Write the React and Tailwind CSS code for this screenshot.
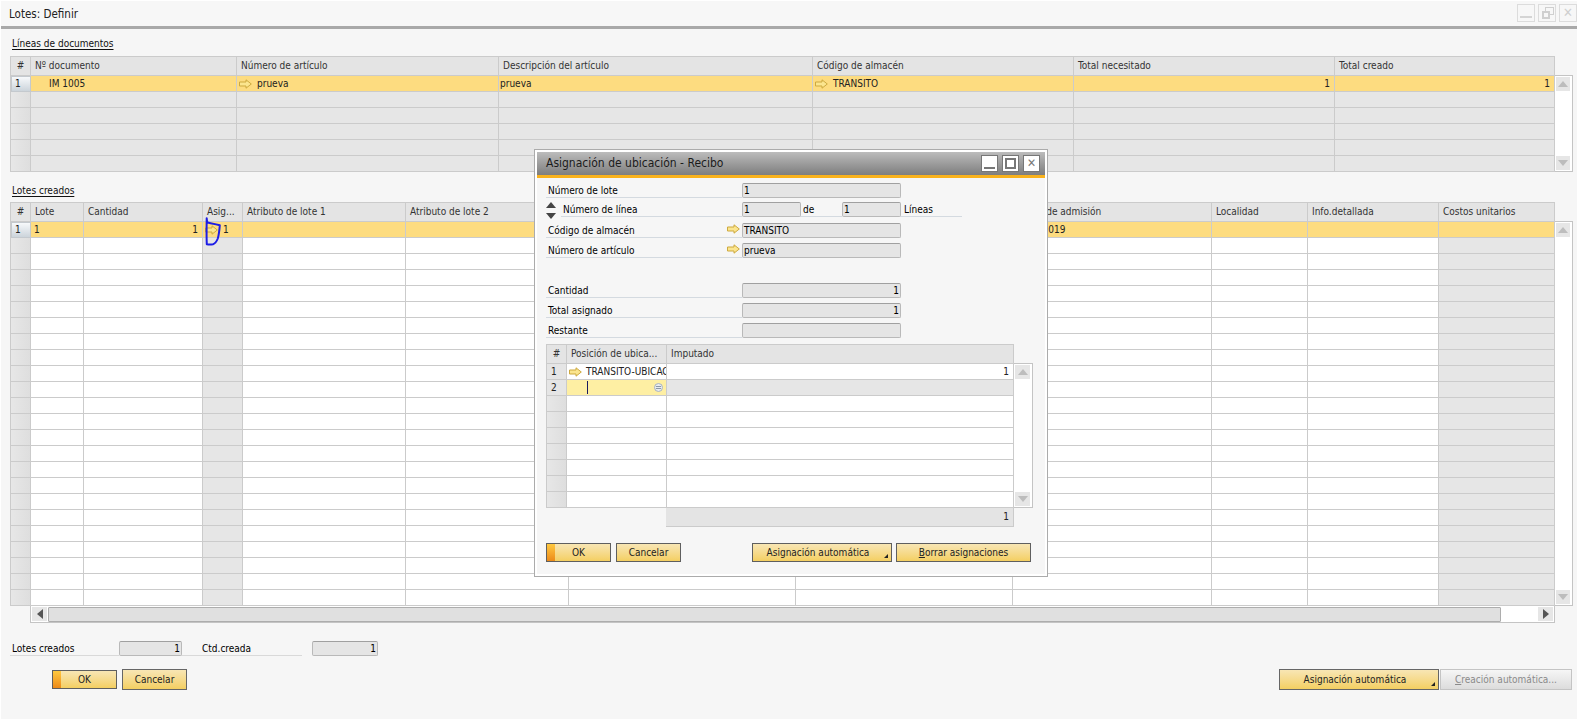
import React from "react";

const Arrow = ({ className = "" }) => (
  <svg width="13" height="10" viewBox="0 0 13 10" className={`shrink-0 ${className}`}>
    <path d="M0.5 3H7V0.8L12.3 5L7 9.2V7H0.5Z" fill="#fbe58e" stroke="#cda93f" strokeWidth="1" />
  </svg>
);

const Tri = ({ dir, color = "#bdbdbd" }) => {
  const d = { up: "M0 6L5 0L10 6Z", down: "M0 0L10 0L5 6Z", left: "M6 0V10L0 5Z", right: "M0 0V10L6 5Z" }[dir];
  const horizontal = dir === "left" || dir === "right";
  return (
    <svg width={horizontal ? 6 : 10} height={horizontal ? 10 : 6} viewBox={horizontal ? "0 0 6 10" : "0 0 10 6"}>
      <path d={d} fill={color} />
    </svg>
  );
};

const NumCell = ({ children, selected }) => (
  <div
    className={
      selected
        ? "flex items-center pl-[3px] border border-[#c4c9ce] bg-gradient-to-b from-[#f7f9fb] to-[#ccd4db] text-[#222]"
        : children
        ? "flex items-center pl-[4px] border-r border-b border-[#cbcbcb] bg-[#e5e5e5]"
        : "border-r border-b border-[#cbcbcb] bg-gradient-to-r from-[#e7e7e7] to-[#dedede]"
    }
  >
    {children}
  </div>
);

const Cell = ({ children, bg = "bg-white", right, className = "" }) => (
  <div
    className={`flex items-center overflow-hidden whitespace-nowrap border-r border-b border-[#cbcbcb] ${bg} ${
      right ? "justify-end pr-[4px]" : "pl-[1px]"
    } ${className}`}
  >
    {children}
  </div>
);

const Head = ({ children, center }) => (
  <div
    className={`flex items-center overflow-hidden whitespace-nowrap border-r border-b border-[#cbcbcb] bg-[#e4e4e4] text-[#333] ${
      center ? "justify-center" : "pl-[4px]"
    }`}
  >
    {children}
  </div>
);

const VScroll = ({ className = "w-[18px]" }) => (
  <div className={`flex flex-col justify-between border border-l-0 border-[#c4c4c4] bg-white p-[1px] pr-[2px] ${className}`}>
    <div className="flex h-[14px] items-center justify-center bg-[#e6e6e6]"><Tri dir="up" /></div>
    <div className="flex h-[14px] items-center justify-center bg-[#e6e6e6]"><Tri dir="down" /></div>
  </div>
);

const Field = ({ children, right, className = "w-[159px]" }) => (
  <div
    className={`flex h-[15px] items-center shrink-0 rounded-[2px] border border-[#b9b9b9] border-t-[#a0a0a0] bg-[#e5e5e5] text-black ${
      right ? "justify-end pr-[1px]" : "pl-[1px]"
    } ${className}`}
  >
    {children}
  </div>
);

const Btn = ({ children, primary, strong, className = "", corner, disabled }) => (
  <button
    className={`relative flex items-center justify-center border ${
      disabled
        ? "border-[#c4c4c4] bg-gradient-to-b from-[#f6f6f6] to-[#dcdcdc] text-[#8a8a8a]"
        : "border-[#5f5f5f] bg-gradient-to-b from-[#f8e6b4] to-[#f4cf60] text-[#222]"
    } ${strong ? "h-[21px] border-[#666]" : "h-[19px]"} ${corner ? "pr-[8px]" : ""} ${className}`}
  >
    {primary && <span className="absolute left-0 top-0 h-full w-[8px] bg-gradient-to-b from-[#ffc93f] to-[#ec8a18]" />}
    {children}
    {corner && (
      <svg width="4" height="4" viewBox="0 0 4 4" className="absolute bottom-[3px] right-[3px]">
        <path d="M4 0V4H0Z" fill="#222" />
      </svg>
    )}
  </button>
);

const FormRow = ({ label, children, className = "", right }) => (
  <div className={`flex items-center h-[15px] ${className}`}>
    <div className="flex h-[15px] items-center justify-between w-[196px] shrink-0 border-b border-[#d4dae0] pl-[2px] pt-px text-black">
      <span>{label}</span>
      {right}
    </div>
    {children}
  </div>
);

const T1 = ["Nº documento", "Número de artículo", "Descripción del artículo", "Código de almacén", "Total necesitado", "Total creado"];
const GRAY = "bg-[#e6e6e6]";
const YEL = "bg-[#fddc80]";

const T2 = [
  "Lote",
  "Cantidad",
  "Asig...",
  "Atributo de lote 1",
  "Atributo de lote 2",
  "",
  "",
  "Fecha de admisión",
  "Localidad",
  "Info.detallada",
  "Costos unitarios",
];

export default function App() {
  return (
    <div className="relative h-[724px] w-[1577px] overflow-hidden bg-white pt-px pl-px font-['DejaVu_Sans','Liberation_Sans',sans-serif] text-[10px] leading-none [font-stretch:condensed] text-[#222]">
      <div className="flex h-[718px] w-[1576px] flex-col bg-[#f6f6f6]">
        {/* Title bar */}
        <div className="flex h-[28px] shrink-0 items-center justify-between border-b-[3px] border-[#a9a9a9] bg-[#f7f7f7] pl-[8px]">
          <span className="pt-[3px] text-[11.5px] text-[#222]">Lotes: Definir</span>
          <div className="flex gap-[3px] pb-[2px]">
            <div className="flex h-[18px] w-[18px] items-end justify-center border border-[#dcdcdc] pb-[3px]"><div className="h-[2px] w-[12px] bg-[#d4d4d4]" /></div>
            <div className="relative h-[18px] w-[18px] border border-[#dcdcdc]">
              <div className="absolute left-[6px] top-[2px] h-[8px] w-[9px] border border-[#cfcfcf]" />
              <div className="absolute left-[3px] top-[6px] h-[8px] w-[8px] border-2 border-[#cfcfcf] bg-[#f7f7f7]" />
            </div>
            <div className="flex h-[18px] w-[18px] items-center justify-center border border-[#dcdcdc] text-[13px] font-bold text-[#cfcfcf]">✕</div>
          </div>
        </div>

        <div className="flex min-h-0 flex-1 flex-col pl-[9px]">
          <div className="flex h-[27px] shrink-0 items-end pb-[7px] pl-[2px]">
            <span className="underline underline-offset-2 text-[#111]">Líneas de documentos</span>
          </div>

          {/* Documents table */}
          <div className="flex shrink-0">
            <div className="grid grid-cols-[20px_206px_262px_314px_261px_261px_220px] grid-rows-[19px] auto-rows-[16px] w-[1545px] border-t border-l border-[#cbcbcb]">
              <Head center>#</Head>
              {T1.map((h) => <Head key={h}>{h}</Head>)}
              <NumCell selected>1</NumCell>
              <Cell bg={YEL} className="pl-[18px]">IM 1005</Cell>
              <Cell bg={YEL} className="pl-[2px] gap-[5px]"><Arrow />prueva</Cell>
              <Cell bg={YEL}>prueva</Cell>
              <Cell bg={YEL} className="pl-[2px] gap-[5px]"><Arrow />TRANSITO</Cell>
              <Cell bg={YEL} right>1</Cell>
              <Cell bg={YEL} right>1</Cell>
              {[0, 1, 2, 3, 4].map((r) => (
                <React.Fragment key={r}>
                  <NumCell />
                  {[0, 1, 2, 3, 4, 5].map((c) => <Cell key={c} bg={GRAY} />)}
                </React.Fragment>
              ))}
            </div>
            <VScroll className="mt-[19px] w-[18px]" />
          </div>

          <div className="flex h-[30px] shrink-0 items-end pb-[6px] pl-[2px]">
            <span className="underline underline-offset-2 text-[#111]">Lotes creados</span>
          </div>

          {/* Batches table */}
          <div className="flex shrink-0">
            <div className="grid grid-cols-[20px_53px_119px_40px_163px_163px_227px_217px_199px_96px_131px_116px] grid-rows-[19px] auto-rows-[16px] w-[1545px] border-t border-l border-[#cbcbcb]">
              <Head center>#</Head>
              {T2.map((h, i) => <Head key={i}>{h}</Head>)}
              <NumCell selected>1</NumCell>
              <Cell bg={YEL} className="pl-[3px]">1</Cell>
              <Cell bg={YEL} right>1</Cell>
              <Cell bg={YEL} className="pl-[2px] gap-[5px]"><Arrow />1</Cell>
              <Cell bg={YEL} /><Cell bg={YEL} /><Cell bg={YEL} /><Cell bg={YEL} />
              <Cell bg={YEL} className="pl-[1px]">25.03.2019</Cell>
              <Cell bg={YEL} /><Cell bg={YEL} /><Cell bg={YEL} />
              {Array.from({ length: 23 }, (_, r) => (
                <React.Fragment key={r}>
                  <NumCell />
                  <Cell /><Cell />
                  <Cell bg={GRAY} />
                  <Cell /><Cell /><Cell /><Cell /><Cell /><Cell /><Cell />
                  <Cell bg={GRAY} />
                </React.Fragment>
              ))}
            </div>
            <VScroll className="mt-[19px] w-[18px]" />
          </div>

          {/* Horizontal scrollbar */}
          <div className="ml-[20px] flex h-[17px] w-[1525px] shrink-0 items-center border border-t-0 border-[#c4c4c4] bg-white pl-[1px] pr-[1px]">
            <div className="flex h-[14px] w-[15px] items-center justify-center bg-[#e6e6e6]"><Tri dir="left" color="#555" /></div>
            <div className="ml-px h-[15px] w-[1453px] rounded-[1px] border border-[#adadad] bg-[#e0e0e0]" />
            <div className="ml-auto flex h-[14px] w-[15px] items-center justify-center bg-[#e6e6e6]"><Tri dir="right" color="#555" /></div>
          </div>

          {/* Totals */}
          <div className="mt-[18px] flex shrink-0 items-center">
            <div className="flex h-[15px] w-[109px] items-center border-b border-[#d9d9d9] pl-[2px] pt-px text-black">Lotes creados</div>
            <Field right className="w-[63px]">1</Field>
            <div className="flex h-[15px] w-[120px] items-center border-b border-[#d9d9d9] pl-[20px] pt-px text-black">Ctd.creada</div>
            <Field right className="ml-[10px] w-[66px]">1</Field>
          </div>

          {/* Buttons */}
          <div className="mt-[13px] flex shrink-0 items-center">
            <Btn primary className="ml-[42px] w-[65px]">OK</Btn>
            <Btn strong className="ml-[5px] w-[65px]">Cancelar</Btn>
            <Btn strong corner className="ml-[1092px] w-[160px]">Asignación automática</Btn>
            <Btn strong disabled className="ml-px w-[132px]"><span><span className="underline">C</span>reación automática...</span></Btn>
          </div>
        </div>
      </div>

      {/* Hand-drawn mark */}
      <svg width="20" height="32" viewBox="0 0 20 32" className="absolute left-[203px] top-[216px]" fill="none">
        <path d="M3.7 2.3C3.8 4 4 5.5 4.6 6.6C8 7.3 13 8 16.8 9.3C16.4 14 15.8 19 14.8 22.5C13.6 25.5 12 27.6 10 28.2C8 28.6 5.8 28.6 3.8 28.3C3.4 20 3.6 10 3.7 2.3Z" stroke="#1d1de6" strokeWidth="2" strokeLinejoin="round" />
      </svg>

      {/* Dialog */}
      <div className="absolute left-[534px] top-[149px] h-[428px] w-[514px] border border-[#ababab] bg-white p-[2px]">
        <div className="flex h-full flex-col bg-[#f6f6f6]">
          <div className="flex h-[26px] shrink-0 items-center justify-between border-b-[3px] border-[#f9b21c] bg-gradient-to-b from-[#bcbcbc] to-[#7e7e7e] pl-[9px] pr-[5px] pb-[1px]">
            <span className="text-[12px] text-[#1b1b1b]">Asignación de ubicación - Recibo</span>
            <div className="flex gap-[4px]">
              <div className="flex h-[17px] w-[17px] items-end justify-center border border-[#777] bg-white pb-[2px]"><div className="h-[2px] w-[11px] bg-[#777]" /></div>
              <div className="flex h-[17px] w-[17px] items-center justify-center border border-[#777] bg-white"><div className="h-[11px] w-[11px] border-2 border-[#777]" /></div>
              <div className="flex h-[17px] w-[17px] items-center justify-center border border-[#777] bg-white text-[12px] font-bold text-[#777]">✕</div>
            </div>
          </div>

          <div className="flex flex-col pl-[9px] pt-[5px]">
            <FormRow label="Número de lote"><Field>1</Field></FormRow>

            <div className="relative mt-[4px] flex h-[15px] items-center pl-[15px]">
              <div className="absolute left-0 top-[0px] flex h-[17px] flex-col justify-between"><Tri dir="up" color="#444" /><Tri dir="down" color="#444" /></div>
              <div className="flex h-[15px] w-[181px] items-center border-b border-[#d4dae0] pl-[2px] pt-px text-black">Número de línea</div>
              <Field className="w-[59px]">1</Field>
              <div className="flex h-[15px] w-[41px] items-center border-b border-[#d4dae0] pl-[2px] pt-px text-black">de</div>
              <Field className="w-[59px]">1</Field>
              <div className="flex h-[15px] w-[61px] items-center border-b border-[#d4dae0] pl-[3px] pt-px text-black">Líneas</div>
            </div>

            <FormRow className="mt-[6px]" label="Código de almacén" right={<Arrow className="mr-[2px] -mt-[3px]" />}><Field>TRANSITO</Field></FormRow>
            <FormRow className="mt-[5px]" label="Número de artículo" right={<Arrow className="mr-[2px] -mt-[3px]" />}><Field>prueva</Field></FormRow>
            <FormRow className="mt-[25px]" label="Cantidad"><Field right>1</Field></FormRow>
            <FormRow className="mt-[5px]" label="Total asignado"><Field right>1</Field></FormRow>
            <FormRow className="mt-[5px]" label="Restante"><Field /></FormRow>

            {/* Bin grid */}
            <div className="mt-[6px] flex">
              <div className="grid grid-cols-[20px_100px_347px] grid-rows-[19px] auto-rows-[16px] w-[468px] border-t border-l border-[#cbcbcb]">
                <Head center>#</Head>
                <Head>Posición de ubica...</Head>
                <Head>Imputado</Head>
                <NumCell>1</NumCell>
                <Cell className="pl-[2px] gap-[4px]"><Arrow />TRANSITO-UBICACION</Cell>
                <Cell right>1</Cell>
                <NumCell>2</NumCell>
                <Cell bg="bg-[#feefa3]" className="relative">
                  <span className="absolute left-[20px] top-[1px] h-[13px] w-px bg-[#1a1a5e]" />
                  <span className="absolute right-[3px] top-[3px] flex h-[9px] w-[9px] flex-col items-center justify-center gap-px rounded-full border border-[#aab3bf] bg-[#e8ecf1]">
                    <span className="h-px w-[5px] bg-[#8d98a6]" />
                    <span className="h-px w-[5px] bg-[#8d98a6]" />
                  </span>
                </Cell>
                <Cell bg={GRAY} />
                {[0, 1, 2, 3, 4, 5, 6].map((r) => (
                  <React.Fragment key={r}>
                    <NumCell /><Cell /><Cell />
                  </React.Fragment>
                ))}
              </div>
              <VScroll className="mt-[19px] h-[145px] w-[19px]" />
            </div>
            <div className="ml-[120px] flex h-[19px] w-[348px] items-center justify-end border-r border-b border-[#cbcbcb] bg-[#e4e4e4] pr-[4px]">1</div>

            {/* Dialog buttons */}
            <div className="mt-[16px] flex items-center">
              <Btn primary className="w-[65px]">OK</Btn>
              <Btn className="ml-[5px] w-[65px]">Cancelar</Btn>
              <Btn corner className="ml-[71px] w-[140px]">Asignación automática</Btn>
              <Btn className="ml-[4px] w-[135px]"><span><span className="underline">B</span>orrar asignaciones</span></Btn>
            </div>
          </div>
        </div>
      </div>
    </div>
  );
}
